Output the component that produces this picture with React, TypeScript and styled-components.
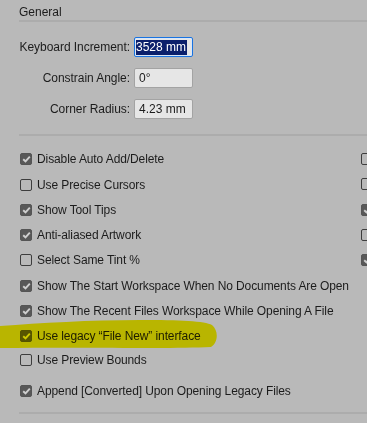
import React from "react";
import styled, { createGlobalStyle } from "styled-components";

const Global = createGlobalStyle`
  html, body { margin: 0; padding: 0; background: #b9b9b9; overflow: hidden; }
  body { font-family: "Liberation Sans", Arial, sans-serif; color: #1c1c1c; }
`;

const Panel = styled.div`
  position: relative;
  width: 367px;
  height: 423px;
  overflow: hidden;
  background: #b9b9b9;
  padding-left: 19px;
  box-sizing: border-box;
`;

const SectionTitle = styled.div`
  font-size: 12px;
  line-height: 14px;
  padding-top: 5px;
  padding-bottom: 1px;
  border-bottom: 2px solid #acacac;
`;

const Fields = styled.div`
  display: grid;
  grid-template-columns: 111px 59px;
  column-gap: 4px;
  row-gap: 11px;
  padding-top: 15px;
  padding-bottom: 15px;
  border-bottom: 2px solid #acacac;
  align-items: center;
`;

const Label = styled.label`
  font-size: 12px;
  letter-spacing: -0.05px;
  text-align: right;
  white-space: nowrap;
`;

const Input = styled.div<{ $focused?: boolean }>`
  box-sizing: border-box;
  height: 20px;
  width: 59px;
  border-radius: 2px;
  border: 1px solid ${(p) => (p.$focused ? "#1a73e0" : "#a3a3a3")};
  box-shadow: ${(p) => (p.$focused ? "inset 0 0 0 1px #d8e6f8" : "none")};
  background: #e6e6e6;
  font-size: 12px;
  line-height: 18px;
  padding-left: 4px;
  overflow: hidden;
  white-space: nowrap;
`;

const Selected = styled.span`
  display: inline-block;
  background: #0b1f6b;
  color: #ffffff;
  line-height: 15px;
  margin-left: -3px;
  padding-right: 1px;
  margin-top: 1px;
`;

const List = styled.div`
  display: grid;
  grid-template-columns: 341px 12px;
  grid-template-rows: 25px 26px 25px 25px 25px 26px 25px 25px 24px 31px;
  padding-top: 10px;
  padding-bottom: 9px;
  border-bottom: 2px solid #acacac;
`;

const Row = styled.div<{ $row: number }>`
  grid-column: 1;
  grid-row: ${(p) => p.$row};
  align-self: end;
  height: 25px;
  display: flex;
  align-items: center;
  gap: 5px;
  font-size: 12px;
  letter-spacing: -0.1px;
  white-space: nowrap;
`;

const SideCell = styled.div<{ $row: number }>`
  grid-column: 2;
  grid-row: ${(p) => p.$row};
  display: flex;
  align-items: center;
`;

const Box = styled.span<{ $checked?: boolean }>`
  position: relative;
  z-index: 1;
  flex: none;
  box-sizing: border-box;
  width: 12px;
  height: 12px;
  margin-left: 1px;
  border-radius: 2px;
  border: 1px solid ${(p) => (p.$checked ? "#555555" : "#3d3d3d")};
  background: ${(p) => (p.$checked ? "#585858" : "transparent")};
  display: flex;
  align-items: center;
  justify-content: center;
`;

const Text = styled.span`
  position: relative;
  z-index: 1;
`;

const Highlight = styled.svg`
  position: absolute;
  left: 0;
  top: 319px;
  width: 222px;
  height: 32px;
  z-index: 2;
  mix-blend-mode: multiply;
  pointer-events: none;
`;

const Check = () => (
  <svg width="9" height="8" viewBox="0 0 9 8">
    <path d="M1.2 4.2 L3.5 6.3 L7.8 1.6" fill="none" stroke="#cfcfcf" strokeWidth="1.9" />
  </svg>
);

const CheckBox = ({ checked }: { checked?: boolean }) => (
  <Box $checked={checked}>{checked && <Check />}</Box>
);

const items: { label: string; checked: boolean }[] = [
  { label: "Disable Auto Add/Delete", checked: true },
  { label: "Use Precise Cursors", checked: false },
  { label: "Show Tool Tips", checked: true },
  { label: "Anti-aliased Artwork", checked: true },
  { label: "Select Same Tint %", checked: false },
  { label: "Show The Start Workspace When No Documents Are Open", checked: true },
  { label: "Show The Recent Files Workspace While Opening A File", checked: true },
  { label: "Use legacy \u201CFile New\u201D interface", checked: true },
  { label: "Use Preview Bounds", checked: false },
  { label: "Append [Converted] Upon Opening Legacy Files", checked: true },
];

const side = [false, false, true, false, true];

export default function App() {
  return (
    <>
      <Global />
      <Panel>
        <SectionTitle>General</SectionTitle>
        <Fields>
          <Label>Keyboard Increment:</Label>
          <Input $focused>
            <Selected>3528 mm</Selected>
          </Input>
          <Label>Constrain Angle:</Label>
          <Input>0°</Input>
          <Label>Corner Radius:</Label>
          <Input>4.23 mm</Input>
        </Fields>
        <List>
          {items.map((it, i) => (
            <Row key={it.label} $row={i + 1}>
              <CheckBox checked={it.checked} />
              <Text>{it.label}</Text>
            </Row>
          ))}
          {side.map((c, i) => (
            <SideCell key={i} $row={i + 1}>
              <CheckBox checked={c} />
            </SideCell>
          ))}
        </List>
        <Highlight viewBox="0 0 222 32">
          <path
            d="M0 7 C40 4 90 1 140 1 C180 1 205 2 212 6 C219 12 218 24 211 28 C170 30 100 28 0 29 Z"
            fill="#fffa00"
          />
        </Highlight>
      </Panel>
    </>
  );
}
